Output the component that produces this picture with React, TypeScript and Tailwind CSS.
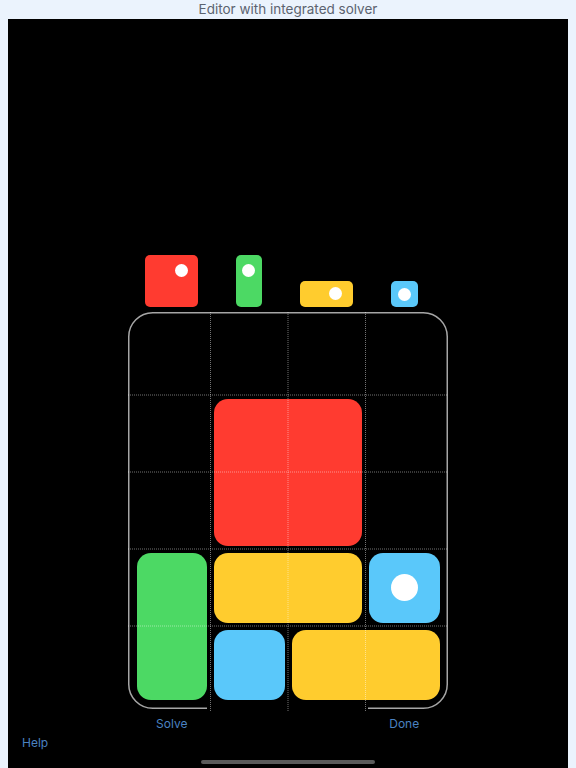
import React from "react";

const CELL_W = 77.5;
const CELL_H = 77;

/* ---------- PIECES ON THE BOARD ---------- */
const pieces = [
  { color: "bg-[#ff3b30]", dot: false, place: "col-start-2 col-span-2 row-start-2 row-span-2" },
  { color: "bg-[#4cd964]", dot: false, place: "col-start-1 col-span-1 row-start-4 row-span-2" },
  { color: "bg-[#ffcc2e]", dot: false, place: "col-start-2 col-span-2 row-start-4 row-span-1" },
  { color: "bg-[#5ac8fa]", dot: true, place: "col-start-4 col-span-1 row-start-4 row-span-1" },
  { color: "bg-[#5ac8fa]", dot: false, place: "col-start-2 col-span-1 row-start-5 row-span-1" },
  { color: "bg-[#ffcc2e]", dot: false, place: "col-start-3 col-span-2 row-start-5 row-span-1" },
];

/* ---------- PALETTE ---------- */
function Palette() {
  return (
    <div className="grid grid-cols-4 w-[310px] items-end justify-items-center mb-[5px]">
      <div className="relative w-[53px] h-[52px] rounded-[5px] bg-[#ff3b30]">
        <div className="absolute left-[30px] top-[9px] w-[13px] h-[13px] rounded-full bg-white" />
      </div>
      <div className="relative w-[26px] h-[52px] rounded-[5px] bg-[#4cd964]">
        <div className="absolute left-[6px] top-[9px] w-[13px] h-[13px] rounded-full bg-white" />
      </div>
      <div className="relative w-[53px] h-[26px] rounded-[5px] bg-[#ffcc2e]">
        <div className="absolute left-[29px] top-[6px] w-[13px] h-[13px] rounded-full bg-white" />
      </div>
      <div className="relative w-[27px] h-[26px] rounded-[5px] bg-[#5ac8fa]">
        <div className="absolute left-[7.5px] top-[6.5px] w-[13px] h-[13px] rounded-full bg-white" />
      </div>
    </div>
  );
}

/* ---------- BOARD OUTLINE + GRID (drawing) ---------- */
function BoardLines() {
  const w = 320;
  const h = 397;
  const r = 24;
  const s = 0.75;
  const outline = `M 79 ${h - s} L ${s + r} ${h - s} A ${r} ${r} 0 0 1 ${s} ${h - s - r} L ${s} ${s + r} A ${r} ${r} 0 0 1 ${s + r} ${s} L ${w - s - r} ${s} A ${r} ${r} 0 0 1 ${w - s} ${s + r} L ${w - s} ${h - s - r} A ${r} ${r} 0 0 1 ${w - s - r} ${h - s} L 240 ${h - s}`;
  const vx = [1, 2, 3].map(i => 5 + CELL_W * i);
  const hy = [1, 2, 3, 4].map(i => 6 + CELL_H * i);
  return (
    <svg
      className="absolute left-0 top-0 pointer-events-none"
      width={w}
      height={h + 4}
      viewBox={`0 0 ${w} ${h + 4}`}
    >
      <path d={outline} fill="none" stroke="#a6a6a6" strokeWidth={1.5} />
      {vx.map(x => (
        <line key={x} x1={x} y1={0} x2={x} y2={h + 2} stroke="rgba(255,255,255,0.5)" strokeWidth={0.9} strokeDasharray="1 1" />
      ))}
      {hy.map(y => (
        <line key={y} x1={0} y1={y} x2={w} y2={y} stroke="rgba(255,255,255,0.5)" strokeWidth={0.9} strokeDasharray="1 1" />
      ))}
    </svg>
  );
}

function Board() {
  return (
    <div className="relative w-[320px] h-[397px] pt-[6px] px-[5px]">
      <div className="grid grid-cols-[repeat(4,77.5px)] grid-rows-[repeat(5,77px)]">
        {pieces.map((p, i) => (
          <div
            key={i}
            className={`${p.place} ${p.color} m-[3.5px] rounded-[14px] flex items-center justify-center`}
          >
            {p.dot && <div className="w-[27px] h-[27px] rounded-full bg-white" />}
          </div>
        ))}
      </div>
      <BoardLines />
    </div>
  );
}

export default function App() {
  return (
    <div
      className="w-[576px] h-[768px] bg-[#ebf3fd] flex flex-col overflow-hidden"
      style={{ fontFamily: "Inter, 'Noto Sans', sans-serif" }}
    >
      <div className="h-[19px] text-center text-[13.5px] leading-[19px] text-[#5c6370]">
        Editor with integrated solver
      </div>

      <div className="mx-2 h-[749px] bg-black flex flex-col items-center pt-[236px]">
        <Palette />
        <Board />

        {/* BUTTONS */}
        <div className="grid grid-cols-4 w-[310px] mt-[7px] text-[12px] leading-[16px] text-[#4a82c2] justify-items-center">
          <span className="col-start-1">Solve</span>
          <span className="col-start-4">Done</span>
        </div>
        <div className="self-start pl-[14px] mt-[3px] text-[12px] leading-[16px] text-[#4a82c2]">
          Help
        </div>

        <div className="mt-auto mb-[4px] w-[174px] h-[4px] rounded-full bg-[#5a5a5a]" />
      </div>
    </div>
  );
}
